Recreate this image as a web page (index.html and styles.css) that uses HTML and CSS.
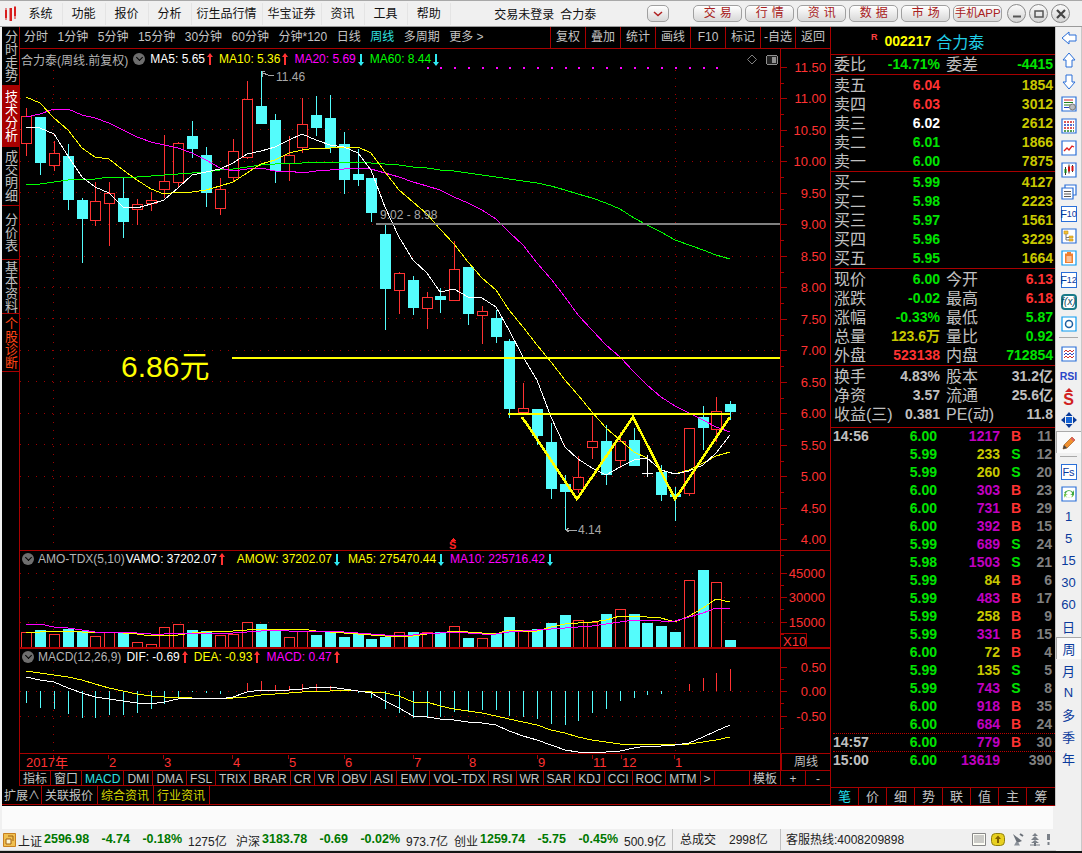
FILE: index.html
```html
<!DOCTYPE html>
<html lang="zh-CN">
<head>
    <meta charset="UTF-8">
    <title>合力泰 周线</title>
    <link rel="stylesheet" href="styles.css">
</head>
<body>
<div class="app">

    <!-- top menu -->
    <header class="menu-bar">
        <svg class="logo" viewBox="0 0 14 16">
            <path d="M1 4h2v8H1zM5.500 2h2.500v13H5.500zM10 1h2v9h-2z" fill="#d81e1e"/>
            <path d="M2 2v12M11 0v13" stroke="#d81e1e" fill="none"/>
        </svg>
        <nav class="menu">
            <a>系统</a><a>功能</a><a>报价</a><a>分析</a><a class="wide">衍生品行情</a><a class="wide">华宝证券</a><a>资讯</a><a>工具</a><a>帮助</a>
        </nav>
        <div class="menu-title"><span>交易未登录</span><span>合力泰</span></div>
        <button class="menu-drop"><svg viewBox="0 0 10 6"><path d="M1 1l4 3.500L9 1" fill="none" stroke="#b02020" stroke-width="1.500"/></svg></button>
        <div class="menu-links">
            <button>交易</button><button>行情</button><button>资讯</button><button>数据</button><button>市场</button><button class="tight">手机APP</button>
        </div>
        <div class="win-ctrl">
            <button><svg viewBox="0 0 12 12"><path d="M2 8.500h8" stroke="#555" stroke-width="2"/></svg></button>
            <button><svg viewBox="0 0 12 12"><path d="M2 3h8v6H2z" fill="none" stroke="#555" stroke-width="1.500"/></svg></button>
            <button><svg viewBox="0 0 12 12"><path d="M2 2l8 8M10 2l-8 8" stroke="#444" stroke-width="2.200"/></svg></button>
        </div>
    </header>

    <!-- chart + quote -->
    <div class="desk">
        <div class="desk-left">
            <div class="desk-upper">
                <aside class="rail">
                    <a>分时走势</a>
                    <a class="active">技术分析</a>
                    <a>成交明细</a>
                    <a class="short">分价表</a>
                    <a class="short">基本资料</a>
                    <a class="hot">个股诊断</a>
                </aside>

                <main class="main">
                    <div class="period-bar">
                        <div class="periods">
                            <a>分时</a><a>1分钟</a><a>5分钟</a><a>15分钟</a><a>30分钟</a><a>60分钟</a><a>分钟*120</a><a>日线</a><a class="on">周线</a><a>多周期</a><a>更多 &gt;</a>
                        </div>
                        <div class="period-tools">
                            <a>复权</a><a>叠加</a><a>统计</a><a>画线</a><a>F10</a><a>标记</a><a>-自选</a><a>返回</a>
                        </div>
                    </div>

                    <div class="chart-stack">
                        <svg id="plot" class="plot" viewBox="20 49 810 721"></svg>

                        <section class="pane pane-price">
                            <div class="legend">
                                <span class="legend-name">合力泰(周线.前复权)</span>
                                <i class="fold"></i>
                                <span class="ma c-white">MA5: 5.65<i class="arrow up"></i></span>
                                <span class="ma c-yellow">MA10: 5.36<i class="arrow up"></i></span>
                                <span class="ma c-magenta">MA20: 5.69<i class="arrow down"></i></span>
                                <span class="ma c-lime">MA60: 8.44<i class="arrow down"></i></span>
                            </div>
                        </section>

                        <section class="pane pane-amo">
                            <div class="legend">
                                <i class="fold first"></i>
                                <span class="legend-name">AMO-TDX(5,10)</span>
                                <span class="ma gap-l c-white">VAMO: 37202.07<i class="arrow up"></i></span>
                                <span class="ma gap-m c-yellow">AMOW: 37202.07<i class="arrow down"></i></span>
                                <span class="ma c-yellow">MA5: 275470.44<i class="arrow down"></i></span>
                                <span class="ma c-magenta">MA10: 225716.42<i class="arrow down"></i></span>
                            </div>
                        </section>

                        <section class="pane pane-macd">
                            <div class="legend">
                                <i class="fold first"></i>
                                <span class="legend-name">MACD(12,26,9)</span>
                                <span class="ma c-white">DIF: -0.69<i class="arrow up"></i></span>
                                <span class="ma c-yellow">DEA: -0.93<i class="arrow up"></i></span>
                                <span class="ma c-magenta">MACD: 0.47<i class="arrow up"></i></span>
                            </div>
                        </section>

                        <section class="pane-axis"><span>周线</span></section>
                    </div>

                    <div class="index-tabs">
                        <a>指标</a><a>窗口</a><a class="on">MACD</a><a>DMI</a><a>DMA</a><a>FSL</a><a>TRIX</a><a>BRAR</a><a>CR</a><a>VR</a><a>OBV</a><a>ASI</a><a>EMV</a><a>VOL-TDX</a><a>RSI</a><a>WR</a><a>SAR</a><a>KDJ</a><a>CCI</a><a>ROC</a><a>MTM</a><a>&gt;</a>
                        <div class="index-tabs-end"><a>模板</a><a class="sign">+</a><a class="sign">-</a></div>
                    </div>
                </main>
            </div>

            <div class="ext-bar">
                <a>扩展∧</a><a>关联报价</a><a class="gold">综合资讯</a><a class="gold">行业资讯</a>
            </div>
        </div>

        <aside class="quote">
            <div class="quote-head">
                <sup>R</sup><b>002217</b><span>合力泰</span>
            </div>

            <div class="quote-block tight">
                <div class="q"><span>委比</span><b class="g">-14.71%</b><span>委差</span><b class="g">-4415</b></div>
            </div>
            <div class="quote-block">
                <div class="q"><span>卖五</span><b class="r">6.04</b><span></span><b class="y">1854</b></div>
                <div class="q"><span>卖四</span><b class="r">6.03</b><span></span><b class="y">3012</b></div>
                <div class="q"><span>卖三</span><b class="w">6.02</b><span></span><b class="y">2612</b></div>
                <div class="q"><span>卖二</span><b class="g">6.01</b><span></span><b class="y">1866</b></div>
                <div class="q"><span>卖一</span><b class="g">6.00</b><span></span><b class="y">7875</b></div>
            </div>
            <div class="quote-block">
                <div class="q"><span>买一</span><b class="g">5.99</b><span></span><b class="y">4127</b></div>
                <div class="q"><span>买二</span><b class="g">5.98</b><span></span><b class="y">2223</b></div>
                <div class="q"><span>买三</span><b class="g">5.97</b><span></span><b class="y">1561</b></div>
                <div class="q"><span>买四</span><b class="g">5.96</b><span></span><b class="y">3229</b></div>
                <div class="q"><span>买五</span><b class="g">5.95</b><span></span><b class="y">1664</b></div>
            </div>
            <div class="quote-block">
                <div class="q"><span>现价</span><b class="g">6.00</b><span>今开</span><b class="r">6.13</b></div>
                <div class="q"><span>涨跌</span><b class="g">-0.02</b><span>最高</span><b class="r">6.18</b></div>
                <div class="q"><span>涨幅</span><b class="g">-0.33%</b><span>最低</span><b class="g">5.87</b></div>
                <div class="q"><span>总量</span><b class="y">123.6万</b><span>量比</span><b class="g">0.92</b></div>
                <div class="q"><span>外盘</span><b class="r">523138</b><span>内盘</span><b class="g">712854</b></div>
            </div>
            <div class="quote-block last">
                <div class="q"><span>换手</span><b class="s">4.83%</b><span>股本</span><b class="s">31.2亿</b></div>
                <div class="q"><span>净资</span><b class="s">3.57</b><span>流通</span><b class="s">25.6亿</b></div>
                <div class="q"><span>收益(三)</span><b class="s">0.381</b><span>PE(动)</span><b class="s">11.8</b></div>
            </div>

            <div class="trades">
                <div class="t"><b class="s">14:56</b><b class="g">6.00</b><b class="m">1217</b><b class="r">B</b><b class="n">11</b></div>
                <div class="t"><b></b><b class="g">5.99</b><b class="y">233</b><b class="g">S</b><b class="n">12</b></div>
                <div class="t"><b></b><b class="g">5.99</b><b class="y">260</b><b class="g">S</b><b class="n">20</b></div>
                <div class="t"><b></b><b class="g">6.00</b><b class="m">303</b><b class="r">B</b><b class="n">23</b></div>
                <div class="t"><b></b><b class="g">6.00</b><b class="m">731</b><b class="r">B</b><b class="n">29</b></div>
                <div class="t"><b></b><b class="g">6.00</b><b class="m">392</b><b class="r">B</b><b class="n">15</b></div>
                <div class="t"><b></b><b class="g">5.99</b><b class="m">689</b><b class="g">S</b><b class="n">24</b></div>
                <div class="t"><b></b><b class="g">5.98</b><b class="m">1503</b><b class="g">S</b><b class="n">21</b></div>
                <div class="t"><b></b><b class="g">5.99</b><b class="y">84</b><b class="r">B</b><b class="n">6</b></div>
                <div class="t"><b></b><b class="g">5.99</b><b class="m">483</b><b class="r">B</b><b class="n">17</b></div>
                <div class="t"><b></b><b class="g">5.99</b><b class="y">258</b><b class="r">B</b><b class="n">9</b></div>
                <div class="t"><b></b><b class="g">5.99</b><b class="m">331</b><b class="r">B</b><b class="n">15</b></div>
                <div class="t"><b></b><b class="g">6.00</b><b class="y">72</b><b class="r">B</b><b class="n">4</b></div>
                <div class="t"><b></b><b class="g">5.99</b><b class="y">135</b><b class="g">S</b><b class="n">5</b></div>
                <div class="t"><b></b><b class="g">5.99</b><b class="m">743</b><b class="g">S</b><b class="n">8</b></div>
                <div class="t"><b></b><b class="g">6.00</b><b class="m">918</b><b class="r">B</b><b class="n">35</b></div>
                <div class="t"><b></b><b class="g">6.00</b><b class="m">684</b><b class="r">B</b><b class="n">24</b></div>
                <div class="t dotted"><b class="s">14:57</b><b class="g">6.00</b><b class="m">779</b><b class="r">B</b><b class="n">30</b></div>
                <div class="t dotted"><b class="s">15:00</b><b class="g">6.00</b><b class="m">13619</b><b></b><b class="n">390</b></div>
            </div>

            <div class="quote-tabs">
                <a class="on">笔</a><a>价</a><a>细</a><a>势</a><a>联</a><a>值</a><a>主</a><a>筹</a>
            </div>
        </aside>
    </div>

    <!-- right toolbar -->
    <aside class="toolbar">
        <a><svg class="ico" viewBox="0 0 16 16"><path d="M1 8l7-6v3h7v6H8v3z" class="arr"/></svg></a>
        <a><svg class="ico" viewBox="0 0 16 16"><path d="M8 1l6 7h-3v7H5V8H2z" class="arr"/></svg></a>
        <a><svg class="ico" viewBox="0 0 16 16"><path d="M8 15l6-7h-3V1H5v7H2z" class="arr"/></svg></a>
        <a><svg class="ico" viewBox="0 0 16 16"><path d="M1 1h14v14H1z" class="box"/><path d="M3 4h9" stroke="#d02020"/><path d="M3 6.500h9M3 9h6" stroke="#208020"/><path d="M3 11.500h5" stroke="#2040c0"/><circle cx="11.500" cy="11" r="3" fill="#bbb" stroke="#777"/></svg></a>
        <a><svg class="ico" viewBox="0 0 16 16"><path d="M1 1h14v14H1z" class="box"/><path d="M3 4h10" stroke="#d02020" stroke-dasharray="2 1" stroke-width="1.500"/><path d="M3 7h10" stroke="#2040c0" stroke-dasharray="2 1" stroke-width="1.500"/><path d="M3 10h10" stroke="#d02020" stroke-dasharray="2 1" stroke-width="1.500"/><path d="M3 13h10" stroke="#208020" stroke-dasharray="2 1" stroke-width="1.500"/></svg></a>
        <a><svg class="ico" viewBox="0 0 16 16"><path d="M1 1h14v14H1z" class="box"/><path d="M3 11l3-3 2 2 3-4 2 1" fill="none" stroke="#e02020" stroke-width="1.300"/></svg></a>
        <a><svg class="ico" viewBox="0 0 16 16"><path d="M1 1h14v14H1z" class="box"/><path d="M4.500 5v8M8 2.500v9M11.500 3v7" stroke="#333"/><path d="M3.500 7h2v4h-2z" fill="#108010"/><path d="M7 4.500h2v5H7z" fill="#d01010"/><path d="M10.500 4h2v5h-2z" fill="#d01010"/></svg></a>
        <a><svg class="ico" viewBox="0 0 16 16"><path d="M4 1h11v10H4z" class="box"/><path d="M1 4h11v11H1z" class="box"/><path d="M3 7.500h7M3 10h7M3 12.500h7" stroke="#555"/></svg></a>
        <a><span class="key">F<small>10</small></span></a>
        <a><svg class="ico" viewBox="0 0 16 16"><path d="M1 1h14v14H1z" class="box"/><path d="M3 3h4v3H3zM8 8h4v2H8zM8 11h4v2H8z" fill="#f0c030" stroke="#c89020" stroke-width=".6"/><path d="M5 6v3.500h3M5 9.500V12h3" fill="none" stroke="#777"/></svg></a>
        <a><svg class="ico" viewBox="0 0 16 16"><path d="M1 1h14v14H1z" class="box alt"/><path d="M4 3.500h8V13H4z" fill="#f08030"/><path d="M6 2h4v3H6z" fill="#f08030"/><path d="M5.500 7h5M5.500 9h5M5.500 11h5" stroke="#fff"/></svg></a>
        <a><span class="key">F<small>12</small></span></a>
        <a><span class="key fx">f(x)</span></a>
        <a><svg class="ico" viewBox="0 0 16 16"><path d="M1 1h14v14H1z" class="box alt"/><circle cx="8" cy="8" r="3.500" fill="none" stroke="#2060a0" stroke-width="1.500"/></svg></a>
        <hr>
        <a><svg class="ico" viewBox="0 0 16 16"><path d="M1 1h14v14H1z" class="box"/><path d="M3 6l2-2 2 2 2-2 2 2 2-2" fill="none" stroke="#d03030"/><path d="M3 9l2-2 2 2 2-2 2 2 2-2" fill="none" stroke="#3040c0"/><path d="M3 12l2-2 2 2 2-2 2 2 2-2" fill="none" stroke="#d03030"/></svg></a>
        <a class="rsi">RSI</a>
        <a><span class="big-s">S</span></a>
        <a><svg class="ico" viewBox="0 0 16 16"><path d="M8 0l3.500 4h-7zM8 16l-3.500-4h7zM0 8l4-3.500v7zM16 8l-4 3.500v-7z" fill="#0a3a98"/><path d="M5 5h6v6H5z" fill="#1464d8"/></svg></a>
        <a class="pressed"><svg class="ico" viewBox="0 0 16 16"><path d="M11 2l3 3-8 8-4 1 1-4z" fill="#f09030" stroke="#a06020" stroke-width=".7"/><path d="M11 2l3 3-1.500 1.500-3-3z" fill="#e06060"/><path d="M2 14l1-4 3 3z" fill="#444"/></svg></a>
        <hr>
        <a><span class="key">Fs</span></a>
        <a><svg class="ico" viewBox="0 0 16 16"><path d="M1 1h14v14H1z" class="box"/><path d="M3 7a5 4 0 0 1 9-1l1-2v5h-4l2-1a3 3 0 0 0-6 0z" fill="#40a840"/><path d="M13 9a5 4 0 0 1-9 1l-1 2V8h4L5 9a3 3 0 0 0 6 0z" fill="#78c850"/></svg></a>
        <a class="word">1</a><a class="word">5</a><a class="word">15</a><a class="word">30</a><a class="word">60</a><a class="word">日</a>
        <a class="word pressed">周</a>
        <a class="word">月</a><a class="word">N</a><a class="word">多</a><a class="word">季</a><a class="word">年</a>
    </aside>

    <!-- bottom strip + status -->
    <footer class="foot">
        <div class="blank-strip"></div>
        <div class="status">
            <svg class="status-badge" viewBox="0 0 13 14"><path d="M.5.500h12v13H.5z" fill="#f0c050" stroke="#c88020"/><path d="M3 6h5v5H3z" fill="#fff6d0" stroke="#a06010"/><path d="M5 3h5v5" fill="none" stroke="#a06010"/></svg>
            <div class="idx"><span>上证</span><b>2596.98</b><b>-4.74</b><b>-0.18%</b><em>1275亿</em></div>
            <div class="idx"><span>沪深</span><b>3183.78</b><b>-0.69</b><b>-0.02%</b><em>973.7亿</em></div>
            <div class="idx"><span>创业</span><b>1259.74</b><b>-5.75</b><b>-0.45%</b><em>500.9亿</em></div>
            <div class="status-cell turnover"><span>总成交</span><em>2998亿</em></div>
            <div class="status-cell">客服热线:4008209898</div>
            <div class="status-icons">
                <svg viewBox="0 0 14 13"><path d="M.5.500h13v12H.5z" fill="#fdfdf5" stroke="#888"/><path d="M2 3h10M2 5h10M2 7h10M2 9h10" stroke="#999"/></svg>
                <svg viewBox="0 0 14 13"><rect x=".5" y=".5" width="13" height="12" rx="4" fill="#e8d020" stroke="#908010"/><path d="M7 2.500l3 3.500H8v4H6V6H4z" fill="#806000"/></svg>
                <svg viewBox="0 0 14 13"><path d="M3 1l9 7-5 2z" fill="#6a7078"/><path d="M6 9l-2 3.500h6L8 9z" fill="#8a9098"/><path d="M10 1l3 2" stroke="#6a7078" stroke-width="2"/></svg>
                <svg viewBox="0 0 12 13"><path d="M6 0l3 3H3zM6 3l4 4H2zM6 7l4 3H2z" fill="#7a8088"/><path d="M5 10h2v3H5z" fill="#6a7078"/><path d="M1 12h10" stroke="#7a8088"/></svg>
                <svg viewBox="0 0 5 13"><path d="M1 1h3v6H1zM1.500 9h2v3h-2z" fill="#7a8088"/></svg>
            </div>
        </div>
    </footer>
</div>

<script src="chart.js"></script>
</body>
</html>
```

FILE: styles.css
```css
* {
    margin: 0;
    padding: 0;
    box-sizing: border-box;
}

body {
    width: 1082px;
    height: 853px;
    overflow: hidden;
    background: #141414;
    font-family: "Liberation Sans", "Noto Sans CJK SC", sans-serif;
    font-size: 12px;
}

a {
    display: block;
    color: inherit;
    cursor: default;
}

button {
    font-family: inherit;
}

.app {
    display: grid;
    grid-template-columns: 1056px 26px;
    grid-template-rows: 27px 779px 45px;
    height: 851px;
    background: #f0f0f0;
}

/* top menu */
.menu-bar {
    grid-column: 1 / 3;
    display: flex;
    align-items: center;
    padding-left: 4px;
    height: 27px;
    background: #f0f0f0;
    border-top: 1px solid #a8a8a8;
    border-bottom: 1px solid #9a9a9a;
    color: #111;
}

.logo {
    width: 14px;
    height: 16px;
}

.menu {
    display: flex;
    margin-left: 1px;
}

.menu a {
    padding: 0 9.5px;
    border-right: 1px solid #e4e4e4;
    margin-right: -1px;
    line-height: 22px;
}

.menu a.wide {
    padding: 0 5.5px;
}

.menu-title {
    display: flex;
    gap: 6px;
    margin-left: 44px;
}

.menu-drop {
    width: 22px;
    height: 17px;
    margin-left: 51px;
    display: flex;
    align-items: center;
    justify-content: center;
    border: 1px solid #a0a0a0;
    border-radius: 5px;
    background: linear-gradient(#ffffff, #d8d8d8);
}

.menu-drop svg {
    width: 10px;
    height: 6px;
}

.menu-links {
    display: flex;
    gap: 3px;
    margin-left: 24px;
}

.menu-links button {
    width: 49px;
    height: 17px;
    border: 1px solid #a0a0a0;
    border-radius: 5px;
    background: linear-gradient(#ffffff, #d8d8d8);
    color: #a82020;
    font-size: 12px;
    line-height: 15px;
    letter-spacing: 4px;
    text-indent: 4px;
}

.menu-links button.tight {
    letter-spacing: 0;
    text-indent: 0;
    font-size: 11.500px;
}

.win-ctrl {
    display: flex;
    gap: 3px;
    margin-left: 5px;
}

.win-ctrl button {
    width: 19px;
    height: 19px;
    display: flex;
    align-items: center;
    justify-content: center;
    border: 1px solid #8a8a8a;
    border-radius: 50%;
    background: linear-gradient(#fafafa, #d4d4d4);
}

.win-ctrl svg {
    width: 12px;
    height: 12px;
}

/* main desk */
.desk {
    display: flex;
    padding-left: 2px;
}

.desk-left {
    width: 828px;
    display: flex;
    flex-direction: column;
    background: #000;
}

.desk-upper {
    display: flex;
    height: 759px;
}

.rail {
    width: 18px;
    background: #000;
    border-right: 1px solid #a80000;
    color: #c0c0c0;
    font-size: 13px;
}

.rail a {
    height: 59px;
    display: flex;
    align-items: center;
    justify-content: center;
    writing-mode: vertical-rl;
    border-bottom: 1px solid #a80000;
    line-height: 17px;
}

.rail a.active {
    height: 61px;
    background: #a80000;
    color: #fff;
}

.rail a.short {
    height: 54px;
}

.rail a.hot {
    height: 58px;
    color: #ff4414;
}

.main {
    width: 810px;
    display: flex;
    flex-direction: column;
}

.period-bar {
    display: flex;
    justify-content: space-between;
    height: 22px;
    border-bottom: 1px solid #a80000;
    color: #c4c4c4;
    line-height: 21px;
}

.periods {
    display: flex;
    gap: 9.500px;
    padding-left: 4px;
}

.periods a.on {
    color: #30e0e0;
}

.period-tools {
    display: flex;
}

.period-tools a {
    width: 35px;
    border-left: 1px solid #a80000;
    text-align: center;
}

.chart-stack {
    position: relative;
    height: 721px;
}

.plot {
    position: absolute;
    left: 0;
    top: 0;
    width: 810px;
    height: 721px;
    shape-rendering: crispEdges;
}

.pane {
    position: relative;
    border-bottom: 1px solid #a80000;
}

.pane-price {
    height: 502px;
}

.pane-amo {
    height: 98px;
    border-bottom-width: 2px;
}

.pane-macd {
    height: 105px;
}

.pane-axis {
    position: relative;
    height: 16px;
    display: flex;
    justify-content: flex-end;
    color: #c0c0c0;
    line-height: 17px;
}

.pane-axis span {
    width: 49px;
    padding-left: 12px;
    border-left: 1px solid #a80000;
}

.legend {
    display: flex;
    align-items: center;
    height: 20px;
    padding-left: 1px;
    color: #b4b4b4;
}

.pane-amo .legend,
.pane-macd .legend {
    height: 16px;
    margin-top: 0;
}

.legend-name {
    margin-right: 5px;
}

.pane-amo .legend-name {
    margin-right: 1px;
}

.fold {
    position: relative;
    width: 12px;
    height: 12px;
    margin-right: 5px;
    border-radius: 50%;
    background: #6e6e6e;
}

.fold.first {
    margin-left: 1px;
    margin-right: 4px;
}

.fold::after {
    content: "";
    position: absolute;
    left: 3.500px;
    top: 2px;
    width: 4px;
    height: 4px;
    border-right: 1px solid #000;
    border-bottom: 1px solid #000;
    transform: rotate(45deg);
}

.ma {
    display: flex;
    align-items: center;
    margin-right: 8px;
    white-space: nowrap;
}

.ma.gap-l {
    margin-right: 14px;
}

.ma.gap-m {
    margin-right: 10px;
}

.c-white { color: #fff; }
.c-yellow { color: #ffff00; }
.c-magenta { color: #ff00ff; }
.c-lime { color: #00ff00; }

.arrow {
    position: relative;
    display: block;
    width: 2px;
    height: 11px;
    margin-left: 4px;
}

.arrow::after {
    content: "";
    position: absolute;
    left: -2px;
    border-left: 3px solid transparent;
    border-right: 3px solid transparent;
}

.arrow.up {
    background: #ff3232;
}

.arrow.up::after {
    top: -1px;
    border-bottom: 4px solid #ff3232;
}

.arrow.down {
    background: #30e8f0;
}

.arrow.down::after {
    bottom: -1px;
    border-top: 4px solid #30e8f0;
}

.index-tabs {
    display: flex;
    height: 16px;
    border-top: 1px solid #a80000;
    border-bottom: 1px solid #a80000;
    color: #c4c4c4;
    line-height: 16px;
}

.index-tabs > a {
    padding: 0 3px;
    border-right: 1px solid #a80000;
    white-space: nowrap;
}

.index-tabs a.on {
    color: #30e0e0;
}

.index-tabs-end {
    display: flex;
    margin-left: auto;
}

.index-tabs-end a {
    padding: 0 3px;
    border-left: 1px solid #a80000;
}

.index-tabs-end a.sign {
    width: 25px;
    text-align: center;
}

.ext-bar {
    display: flex;
    height: 19px;
    border-bottom: 1px solid #a80000;
    color: #c4c4c4;
    line-height: 21px;
}

.ext-bar a {
    padding: 0 3px;
    width: 56px;
    border-right: 1px solid #a80000;
    white-space: nowrap;
    overflow: hidden;
}

.ext-bar a:first-child {
    width: 40px;
    padding: 0 2px;
}

.ext-bar a.gold {
    color: #d8d800;
}

/* quote panel */
.quote {
    width: 226px;
    display: flex;
    flex-direction: column;
    background: #000;
    border-left: 1px solid #a80000;
    border-right: 1px solid #c8c8c8;
}

.quote-head {
    display: flex;
    align-items: center;
    height: 28px;
    padding-left: 40px;
    border-bottom: 1px solid #a80000;
}

.quote-head sup {
    margin: -8px 7px 0 0;
    color: #ff4040;
    font-size: 9px;
    font-weight: bold;
}

.quote-head b {
    color: #ffff00;
    font-size: 14px;
}

.quote-head span {
    margin-left: 5px;
    color: #20d0e8;
    font-size: 16px;
}

.quote-block {
    padding: 1px 0 0 3px;
    border-bottom: 1px solid #a80000;
}

.quote-block.tight {
    padding: 0 0 0 3px;
    height: 20px;
}

.quote-block.last {
    height: 62px;
}

.q {
    display: grid;
    grid-template-columns: 40px 66px 42px 71px;
    column-gap: 0;
    height: 19px;
    line-height: 19px;
    white-space: nowrap;
}

.q span {
    color: #c0c0c0;
    font-size: 16px;
}

.q b {
    text-align: right;
    font-size: 14px;
}

.q span:nth-child(3) {
    margin-left: 6px;
}

.r { color: #ff3232; }
.g { color: #00e400; }
.y { color: #c8c800; }
.w { color: #fff; }
.s { color: #c0c0c0; }
.m { color: #c000c0; }
.n { color: #808080; }

.trades {
    flex: 1;
    margin-top: -1px;
    padding-left: 2px;
}

.t {
    display: grid;
    grid-template-columns: 40px 64px 63px 28px 24px;
    height: 18px;
    line-height: 18px;
    font-size: 14px;
    white-space: nowrap;
}

.t b {
    text-align: right;
}

.t b:first-child {
    text-align: left;
}

.t b:nth-child(4) {
    margin-left: 4px;
    text-align: center;
}

.t.dotted {
    border-top: 1px dotted #c00000;
    line-height: 16px;
}

.quote-tabs {
    display: flex;
    height: 19px;
    border-top: 1px solid #a80000;
    border-bottom: 1px solid #a80000;
    color: #c0c0c0;
    font-size: 13px;
    line-height: 17px;
}

.quote-tabs a {
    width: 28px;
    text-align: center;
    border-right: 1px solid #a80000;
}

.quote-tabs a:last-child {
    border-right: 0;
}

.quote-tabs a.on {
    color: #20e0f0;
}

/* right toolbar */
.toolbar {
    grid-row: 2 / 4;
    grid-column: 2;
    display: flex;
    flex-direction: column;
    padding-top: 0;
    background: #f0f0f0;
    border-right: 1px solid #c8c8c8;
    color: #0a3a9c;
    font-size: 13px;
}

.toolbar a {
    height: 22px;
    flex: none;
    display: flex;
    align-items: center;
    justify-content: center;
}

.toolbar hr {
    flex: none;
    height: 1px;
    margin: 3px 4px 4px;
    border: 0;
    background: #a8a8a8;
}

.toolbar hr:first-of-type {
    margin: 2px 3px 5px;
}

.toolbar .pressed {
    background: #fafafa;
    border-top: 1px solid #aaa;
    border-left: 1px solid #aaa;
}

.ico {
    width: 16px;
    height: 16px;
    shape-rendering: auto;
}

.arr {
    fill: #fff;
    stroke: #2a6fd8;
}

.box {
    fill: #fff;
    stroke: #2a6fd8;
    stroke-width: 1.200px;
}

.box.alt {
    stroke: #0a9af0;
}

.key {
    width: 16px;
    height: 16px;
    display: flex;
    align-items: center;
    justify-content: center;
    background: #fff;
    border: 1px solid #2a6fd8;
    color: #0a3aa0;
    font-size: 11px;
    line-height: 1;
}

.key small {
    font-size: 9px;
}

.key.fx {
    border: 2px solid #1a7a88;
    border-radius: 4px;
    color: #0a4a60;
    font-size: 10px;
    font-style: italic;
}

.rsi {
    color: #2a46c8;
    font-weight: bold;
    font-size: 10.500px;
}

.big-s {
    position: relative;
    color: #d02020;
    font-weight: bold;
    font-size: 16px;
    line-height: 16px;
    margin-top: 4px;
}

.big-s::before {
    content: "";
    position: absolute;
    left: 2px;
    top: -4px;
    border-left: 4px solid transparent;
    border-right: 4px solid transparent;
    border-bottom: 4px solid #d02020;
}

/* bottom */
.foot {
    grid-column: 1;
    grid-row: 3;
    display: flex;
    flex-direction: column;
}

.blank-strip {
    height: 24px;
    margin: 0 3px 0 2px;
    background: #fbfbfb;
}

.status {
    flex: 1;
    display: flex;
    align-items: center;
    padding-left: 3px;
    border-bottom: 1px solid #d0d0d0;
    color: #222;
}

.status-badge {
    width: 13px;
    height: 14px;
    margin-right: 2px;
}

.idx {
    display: grid;
    grid-template-columns: 26px 46px 40px 52px 54px;
    padding-top: 2px;
    white-space: nowrap;
}

.idx b {
    color: #007800;
    text-align: right;
    font-size: 12.500px;
}

.idx b:nth-child(2) {
    text-align: left;
}

.idx em,
.status-cell em {
    margin-left: 6px;
    font-style: normal;
}

.status-cell {
    height: 21px;
    padding: 2px 0 0 7px;
    border-left: 1px solid #c0c0c0;
    line-height: 19px;
    white-space: nowrap;
}

.turnover {
    width: 108px;
}

.turnover em {
    margin-left: 13px;
}

.status-cell + .status-cell {
    padding-left: 5px;
}

.status-icons {
    display: flex;
    align-items: center;
    gap: 5px;
    margin-left: auto;
    margin-right: 5px;
}

.status-icons svg {
    height: 13px;
    width: auto;
}

/* plot contents */
.grid-dot {
    stroke: #a00000;
    stroke-dasharray: 1 7;
    fill: none;
}

.axis-line {
    stroke: #a80000;
}

.axis-text {
    font-size: 13px;
    fill: #ff3232;
    text-anchor: end;
}

.month {
    font-size: 13px;
    fill: #ff3232;
}

.note {
    font-size: 12px;
    fill: #a8a8a8;
}

.big-note {
    font-size: 30px;
    fill: #ffff00;
}

.wick-up, .body-up { stroke: #ff3232; }
.wick-down { stroke: #54fcfc; }
.body-up { fill: #000; }
.body-down { fill: #54fcfc; }
.doji { stroke: #fff; }
```

FILE: chart.js
```js
// candles: wick top, body top, body bottom, wick bottom (page px), 1 = up (hollow red)
var candles = [
    [108,116,143,156,1],[117,117,163,175,0],[141,153,165,171,1],[144,156,200,210,0],
    [198,200,219,263,0],[182,201,220,226,1],[182,193,203,246,1],[178,198,222,238,0],
    [199,204,209,225,1],[192,200,203,211,1],[135,181,189,198,1],[142,143,182,187,1],
    [121,136,149,158,0],[147,155,193,207,0],[178,189,208,215,1],[139,151,177,181,1],
    [81,99,157,159,1],[71,106,124,124,0],[114,120,171,183,0],[136,155,163,181,1],
    [98,124,147,153,1],[96,115,128,136,0],[95,118,148,153,0],[132,144,180,194,0],
    [149,174,180,186,0],[178,178,213,222,0],[225,234,289,330,0],[272,273,290,314,1],
    [276,280,308,315,0],[292,297,308,329,1],[288,296,300,313,0],[241,269,300,301,1],
    [267,267,314,325,0],[306,311,315,344,1],[310,318,337,343,0],[339,341,409,418,0],
    [383,408,412,413,1],[409,409,436,445,0],[423,442,489,499,0],[475,484,492,530,0],
    [456,477,489,493,1],[416,441,447,459,1],[425,441,475,485,0],[432,441,460,468,1],
    [428,440,466,466,0],[455,473,473,477,2],[465,472,495,501,0],[487,494,497,521,0],
    [428,428,493,496,1],[406,417,428,450,0],[397,411,429,442,1],[401,404,412,420,0]
];

var ma5 = [127,128,134,156,177,187,193,207,208,204,200,188,175,172,169,163,154,151,147,140,134,140,145,147,153,170,207,237,260,273,292,289,297,298,307,330,357,380,417,447,459,468,475,467,460,458,470,474,471,465,453,435];
var ma10 = [97,103,118,130,148,157,159,170,180,189,194,192,192,190,186,182,173,164,160,153,150,148,148,147,147,153,172,190,202,214,229,244,262,278,290,310,327,345,362,380,395,412,428,440,452,458,470,474,470,463,456,452];
var ma20 = [117,114,109,109,115,118,123,130,137,142,145,148,153,160,168,171,169,168,171,171,173,171,170,169,168,169,173,177,182,186,190,197,203,210,219,232,245,263,279,297,315,330,345,357,372,385,397,406,413,420,427,432];
var ma60 = [185,184,182,180,179,179,177,177,177,176,175,174,173,172,170,169,167,165,164,163,163,162,162,162,162,163,164,165,167,168,170,171,173,175,177,179,181,183,186,190,194,198,203,209,218,225,232,240,245,250,255,259];

var volTop = [632,630,634,629,631,636,632,632,642,644,627,624,630,631,635,634,622,624,631,637,631,635,632,637,634,639,637,632,632,632,632,626,638,638,634,617,631,629,623,615,620,622,614,609,614,623,626,632,580,570,582,640];
var volMa5 = [632,632,631,631,632,632,632,633,634,636,635,635,633,632,631,631,630,629,629,629,629,631,632,633,634,635,636,636,636,634,633,631,632,633,634,630,631,631,627,624,623,622,620,616,616,617,618,622,616,608,599,602];
var volMa10 = [624,624,627,628,630,632,632,632,633,634,634,633,633,633,633,633,632,631,630,631,631,631,631,632,633,634,635,635,635,633,633,632,633,634,634,632,631,630,629,628,627,626,624,622,620,620,621,621,617,613,608,609];

var macdEnd = [703,708,709,714,718,718,715,715,713,709,704,698,692,693,694,691,683,681,685,686,684,684,686,691,693,698,709,713,718,718,717,712,711,710,710,716,717,719,724,725,721,713,709,701,698,695,694,691,684,678,673,669];
var dif = [677,680,682,688,693,697,699,701,703,704,702,699,698,698,699,697,692,690,690,690,689,687,687,689,691,693,701,708,716,717,719,720,722,723,725,731,736,740,745,750,752,752,752,751,748,746,746,745,743,737,731,725];
var dea = [671,673,675,677,680,684,688,691,694,696,697,697,698,698,698,698,697,695,694,693,692,691,691,690,691,692,693,696,702,702,706,709,711,713,716,719,722,725,730,733,737,740,742,744,744,744,744,744,744,742,740,737];

function cx(i) {
    return Math.round(26.3 + i * 13.8);
}

function hline(y, x1, x2, cls) {
    return '<line x1="' + x1 + '" x2="' + x2 + '" y1="' + (y + .5) + '" y2="' + (y + .5) + '" class="' + cls + '"/>';
}

function vline(x, y1, y2, cls) {
    return '<line x1="' + (x + .5) + '" x2="' + (x + .5) + '" y1="' + y1 + '" y2="' + y2 + '" class="' + cls + '"/>';
}

function series(ys, color) {
    var pts = ys.map(function(y, i) { return cx(i) + ',' + y; }).join(' ');
    return '<polyline points="' + pts + '" fill="none" stroke="' + color + '"/>';
}

function label(x, y, text, cls) {
    return '<text x="' + x + '" y="' + y + '" class="' + cls + '">' + text + '</text>';
}

var out = '';
var i, y;

// grid
[98, 129, 161, 192, 224, 256, 287, 318, 350, 381, 413, 444, 476, 507].forEach(function(y) {
    out += hline(y, 20, 780, 'grid-dot');
});
[573, 597, 622, 716].forEach(function(y) { out += hline(y, 20, 780, 'grid-dot'); });
out += hline(691, 20, 780, 'grid-dot');
[53, 675].forEach(function(x) {
    out += vline(x, 70, 550, 'grid-dot');
    out += vline(x, 573, 648, 'grid-dot');
    out += vline(x, 662, 754, 'grid-dot');
});

// price axis
out += vline(780, 49, 770, 'axis-line');
['11.50','11.00','10.50','10.00','9.50','9.00','8.50','8.00','7.50','7.00','6.50','6.00','5.50','5.00','4.50','4.00'].forEach(function(p, n) {
    y = Math.round(67 + n * 31.47);
    out += hline(y, 781, 787, 'axis-line');
    out += hline(y + 16, 781, 784, 'axis-line');
    out += label(826, y + 5, p, 'axis-text');
});

// candles
candles.forEach(function(c, i) {
    var x = cx(i);
    if (c[4] === 2) {
        out += vline(x, c[0], c[3], 'doji') + hline(c[1], x - 5, x + 6, 'doji');
    } else if (c[4] === 1) {
        out += vline(x, c[0], c[3], 'wick-up');
        out += '<rect x="' + (x - 5) + '.5" y="' + c[1] + '.5" width="10" height="' + (c[2] - c[1]) + '" class="body-up"/>';
    } else {
        out += vline(x, c[0], c[3], 'wick-down');
        out += '<rect x="' + (x - 5) + '" y="' + c[1] + '" width="11" height="' + (c[2] - c[1]) + '" class="body-down"/>';
    }
});

out += series(ma60, '#00ff00') + series(ma20, '#ff00ff') + series(ma10, '#ffff00') + series(ma5, '#ffffff');

// marks on the price pane
for (i = 29; i <= 50; i++) {
    out += '<rect x="' + cx(i) + '" y="67" width="2" height="2" fill="#ff00ff"/>';
}
out += '<line x1="376" x2="780" y1="224" y2="224" stroke="#808080" stroke-width="2"/>';
out += label(380, 219, '9.02 - 8.98', 'note');
out += '<line x1="232" x2="780" y1="357.5" y2="357.5" stroke="#ffff00" stroke-width="2"/>';
out += label(121, 377, '6.86元', 'big-note');
out += '<line x1="508" x2="730" y1="413.5" y2="413.5" stroke="#ffff00" stroke-width="2"/>';
out += '<polyline points="522,417 577,499 633,417 675,499 730,417" fill="none" stroke="#ffff00" stroke-width="2.500"/>';

out += '<path d="M262 71v6M262 71h3M263 73l5 2h6" fill="none" stroke="#a8a8a8"/>';
out += label(276, 81, '11.46', 'note');
out += '<path d="M566 530h11M566 530l3-2M566 530l3 2" fill="none" stroke="#a8a8a8"/>';
out += label(578, 534, '4.14', 'note');

// top right corner marks
out += '<path d="M752 55l4.500 4.500-4.500 4.500-4.500-4.500z" fill="none" stroke="#808080" shape-rendering="auto"/>';
out += '<rect x="766.500" y="55.500" width="11" height="9" rx="2" fill="#222" stroke="#909090"/><rect x="772" y="57" width="4" height="6" fill="#909090"/>';

// S signal
out += '<path d="M453 538l3 3h-6z" fill="#ff2020"/>';
out += '<text x="449" y="549" fill="#ff2020" style="font-size:11px;font-weight:bold">S</text>';

// volume
volTop.forEach(function(top, i) {
    var x = cx(i);
    if (candles[i][4] === 1) {
        out += '<rect x="' + (x - 5) + '.5" y="' + top + '.5" width="10" height="' + (647 - top) + '" class="body-up"/>';
    } else {
        out += '<rect x="' + (x - 5) + '" y="' + top + '" width="11" height="' + (648 - top) + '" class="body-down"/>';
    }
});
out += series(volMa5, '#ffff00') + series(volMa10, '#ff00ff');
[['45000', 573], ['30000', 597], ['15000', 622]].forEach(function(a) {
    out += hline(a[1], 781, 787, 'axis-line');
    out += hline(a[1] + 12, 781, 784, 'axis-line');
    out += label(825, a[1] + 5, a[0], 'axis-text');
});
out += '<path d="M781 633.500h25.500V648" fill="none" class="axis-line"/>';
out += label(783, 646, 'X10', 'month');

// macd
macdEnd.forEach(function(e, i) {
    if (e === 691) return;
    out += vline(cx(i), Math.min(e, 691), Math.max(e, 691), e > 691 ? 'wick-down' : 'wick-up');
});
out += series(dea, '#ffff00') + series(dif, '#ffffff');
[['0.50', 667], ['0.00', 691], ['-0.50', 716]].forEach(function(a) {
    out += hline(a[1], 781, 787, 'axis-line');
    out += hline(a[1] + 12, 781, 784, 'axis-line');
    out += label(826, a[1] + 5, a[0], 'axis-text');
});

// month axis
[[26,'2017年'],[108,'2'],[163,'3'],[232,'4'],[288,'5'],[344,'6'],[413,'7'],[468,'8'],[537,'9'],[592,'11'],[621,'12'],[674,'1']].forEach(function(m) {
    out += vline(m[0] < 30 ? 53 : m[0], 755, 759, 'axis-line');
    out += label(m[0] + (m[0] < 30 ? 0 : 1), 767, m[1], 'month');
});

document.getElementById('plot').innerHTML = out;
```
